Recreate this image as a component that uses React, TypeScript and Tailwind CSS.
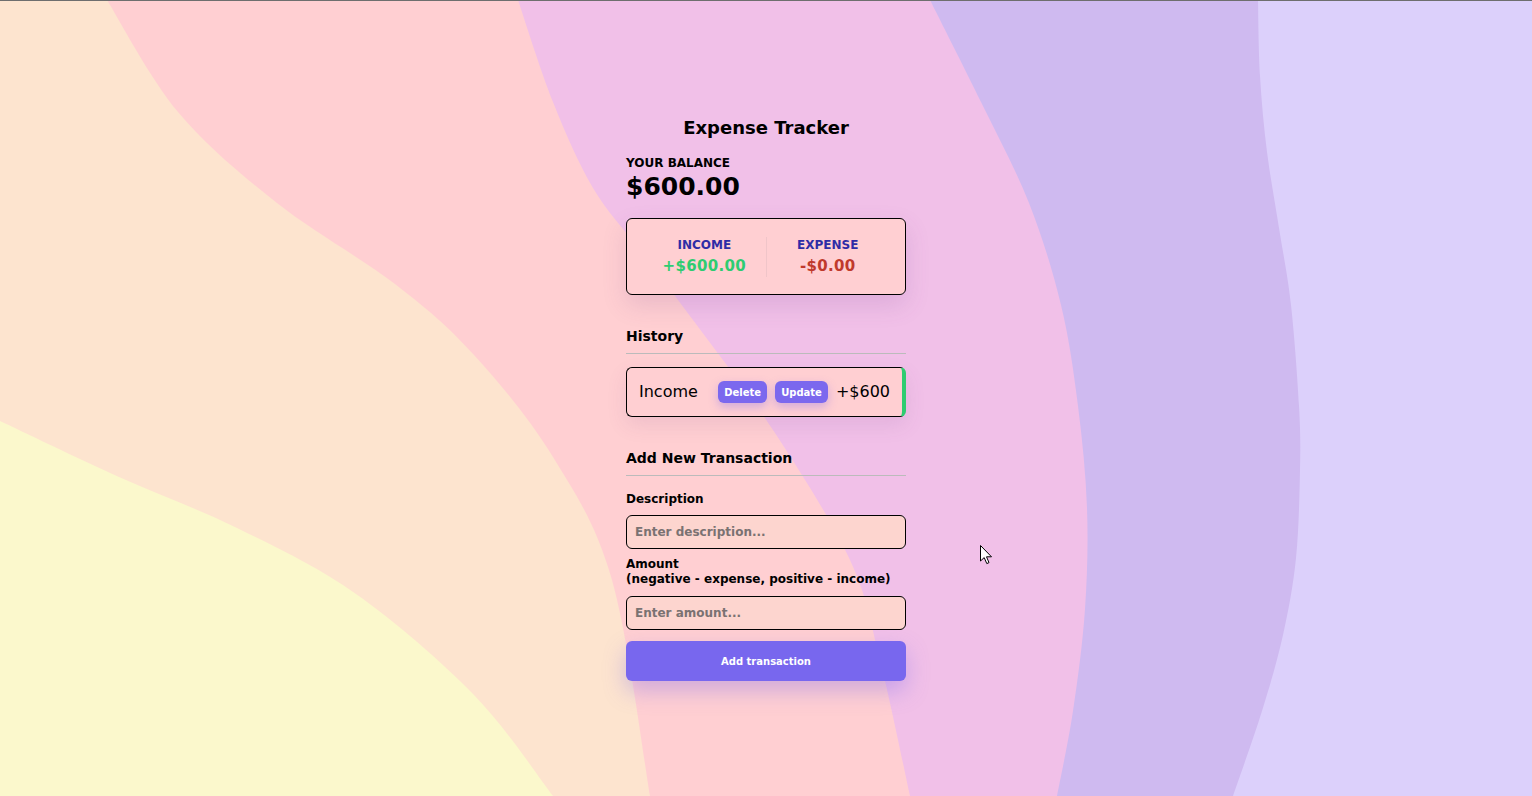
import React from "react";

type Pt = [number, number];

// catmull-rom -> cubic bezier, so the wave edges come out smooth
function smooth(pts: Pt[]): string {
  let d = `M${pts[0][0]} ${pts[0][1]}`;
  for (let i = 0; i < pts.length - 1; i++) {
    const p0 = pts[i - 1] || pts[i];
    const p1 = pts[i];
    const p2 = pts[i + 1];
    const p3 = pts[i + 2] || p2;
    const c1x = p1[0] + (p2[0] - p0[0]) / 6;
    const c1y = p1[1] + (p2[1] - p0[1]) / 6;
    const c2x = p2[0] - (p3[0] - p1[0]) / 6;
    const c2y = p2[1] - (p3[1] - p1[1]) / 6;
    d += ` C${c1x.toFixed(1)} ${c1y.toFixed(1)} ${c2x.toFixed(1)} ${c2y.toFixed(1)} ${p2[0]} ${p2[1]}`;
  }
  return d;
}

const edgeLavender: Pt[] = [
  [1258, 0], [1260, 76], [1267, 152], [1279, 228], [1291, 305], [1299, 406],
  [1300, 470], [1296, 558], [1283, 635], [1262, 711], [1233, 796],
];
const edgeViolet: Pt[] = [
  [930, 0], [981, 102], [1029, 203], [1061, 305], [1078, 406], [1087, 508],
  [1085, 609], [1073, 711], [1057, 796],
];
const edgePink: Pt[] = [
  [518, 0], [553, 102], [593, 188], [640, 250], [693, 320], [775, 433],
  [850, 560], [880, 660], [910, 796],
];
const edgePeach: Pt[] = [
  [107, 0], [178, 112], [277, 203], [395, 284], [474, 355], [553, 457],
  [612, 580], [650, 796],
];
const edgeYellow: Pt[] = [
  [0, 421], [119, 477], [237, 528], [356, 594], [474, 695], [553, 796],
];

const leftOf = (edge: Pt[]) => `${smooth(edge)} L0 796 L0 0 Z`;

function Waves() {
  return (
    <svg
      className="absolute inset-0 h-full w-full"
      viewBox="0 0 1532 796"
      preserveAspectRatio="none"
    >
      <rect width="1532" height="796" fill="#dcd0fb" />
      <path d={leftOf(edgeLavender)} fill="#cfbaf0" />
      <path d={leftOf(edgeViolet)} fill="#f1c0e8" />
      <path d={leftOf(edgePink)} fill="#ffcfd2" />
      <path d={leftOf(edgePeach)} fill="#fde4cf" />
      <path d={`${smooth(edgeYellow)} L0 796 Z`} fill="#fbf8cc" />
    </svg>
  );
}

export default function App() {
  return (
    <div
      className="relative h-[796px] w-full overflow-hidden text-black"
      style={{ fontFamily: '"DejaVu Sans", "Open Sans", sans-serif' }}
    >
      <Waves />
      <div className="absolute left-0 right-0 top-0 h-px bg-[#6e6e6e]" />

      <div className="relative z-10 mx-auto w-[280px] pt-[114px]">
        <h2 className="text-center text-[18px] font-semibold leading-7">
          Expense Tracker
        </h2>

        <h4 className="mt-[13px] text-[12px] font-semibold uppercase leading-4">
          Your Balance
        </h4>
        <h1 className="mt-px text-[25px] font-bold leading-[30px]">$600.00</h1>

        {/* income / expense */}
        <div className="mt-4 flex h-[77px] items-center rounded-md border border-black bg-[#ffcfd2] px-4 shadow-[0_10px_24px_rgba(120,70,140,0.16)]">
          <div className="flex flex-1 flex-col items-center">
            <h4 className="text-[12px] font-semibold uppercase leading-4 text-[#2e2ca6]">
              Income
            </h4>
            <p className="mt-[3px] text-[15px] font-bold leading-5 tracking-[0.3px] text-[#2ecc71]">
              +$600.00
            </p>
          </div>
          <div className="h-[40px] w-px bg-[#f0c5c9]" />
          <div className="flex flex-1 flex-col items-center">
            <h4 className="text-[12px] font-semibold uppercase leading-4 text-[#2e2ca6]">
              Expense
            </h4>
            <p className="mt-[3px] text-[15px] font-bold leading-5 tracking-[0.3px] text-[#c0392b]">
              -$0.00
            </p>
          </div>
        </div>

        <h3 className="mt-[31px] border-b border-[#bbb] pb-[7px] text-[14px] font-semibold leading-5">
          History
        </h3>

        <ul className="mt-[13px]">
          <li className="flex h-[50px] items-center justify-between rounded-md border border-black border-r-4 border-r-[#2ecc71] bg-[#ffcfd2] pl-3 pr-3 shadow-[0_8px_20px_rgba(120,70,140,0.12)]">
            <span className="text-[16px] font-medium">Income</span>
            <div className="flex items-center gap-2">
              <button className="h-[22px] rounded-md bg-[#7b68ee] px-[6px] text-[10px] font-bold text-white shadow-[0_4px_10px_rgba(123,104,238,0.35)]">
                Delete
              </button>
              <button className="h-[22px] rounded-md bg-[#7b68ee] px-[6px] text-[10px] font-bold text-white shadow-[0_4px_10px_rgba(123,104,238,0.35)]">
                Update
              </button>
              <span className="text-[16px] font-medium">+$600</span>
            </div>
          </li>
        </ul>

        <h3 className="mt-[31px] border-b border-[#bbb] pb-[7px] text-[14px] font-semibold leading-5">
          Add New Transaction
        </h3>

        <form>
          <label className="mt-[15px] block text-[12px] font-semibold leading-4">
            Description
          </label>
          <input
            type="text"
            placeholder="Enter description..."
            className="mt-2 block h-[34px] w-full rounded-md border border-black bg-[#fdd5cf] px-[8px] text-[12px] font-semibold outline-none placeholder:text-[#7a7272]"
          />
          <label className="mt-[8px] block text-[12px] font-semibold leading-[15px]">
            Amount
            <br />
            (negative - expense, positive - income)
          </label>
          <input
            type="number"
            placeholder="Enter amount..."
            className="mt-[9px] block h-[34px] w-full rounded-md border border-black bg-[#fdd5cf] px-[8px] text-[12px] font-semibold outline-none placeholder:text-[#7a7272]"
          />
          <button
            type="button"
            className="mt-[11px] block h-[40px] w-full rounded-md bg-[#7867ee] text-[10px] font-bold text-white shadow-[0_10px_22px_rgba(120,103,238,0.35)]"
          >
            Add transaction
          </button>
        </form>
      </div>

      {/* mouse pointer caught in the shot */}
      <svg
        className="absolute left-[980px] top-[545px] z-20"
        width="13"
        height="20"
        viewBox="0 0 13 20"
      >
        <path
          d="M0.5 0.5 L0.5 16 L4.2 12.6 L6.8 18.6 L9 17.6 L6.5 11.8 L11.5 11.8 Z"
          fill="#fff"
          stroke="#000"
          strokeWidth="1"
          strokeLinejoin="round"
        />
      </svg>
    </div>
  );
}
